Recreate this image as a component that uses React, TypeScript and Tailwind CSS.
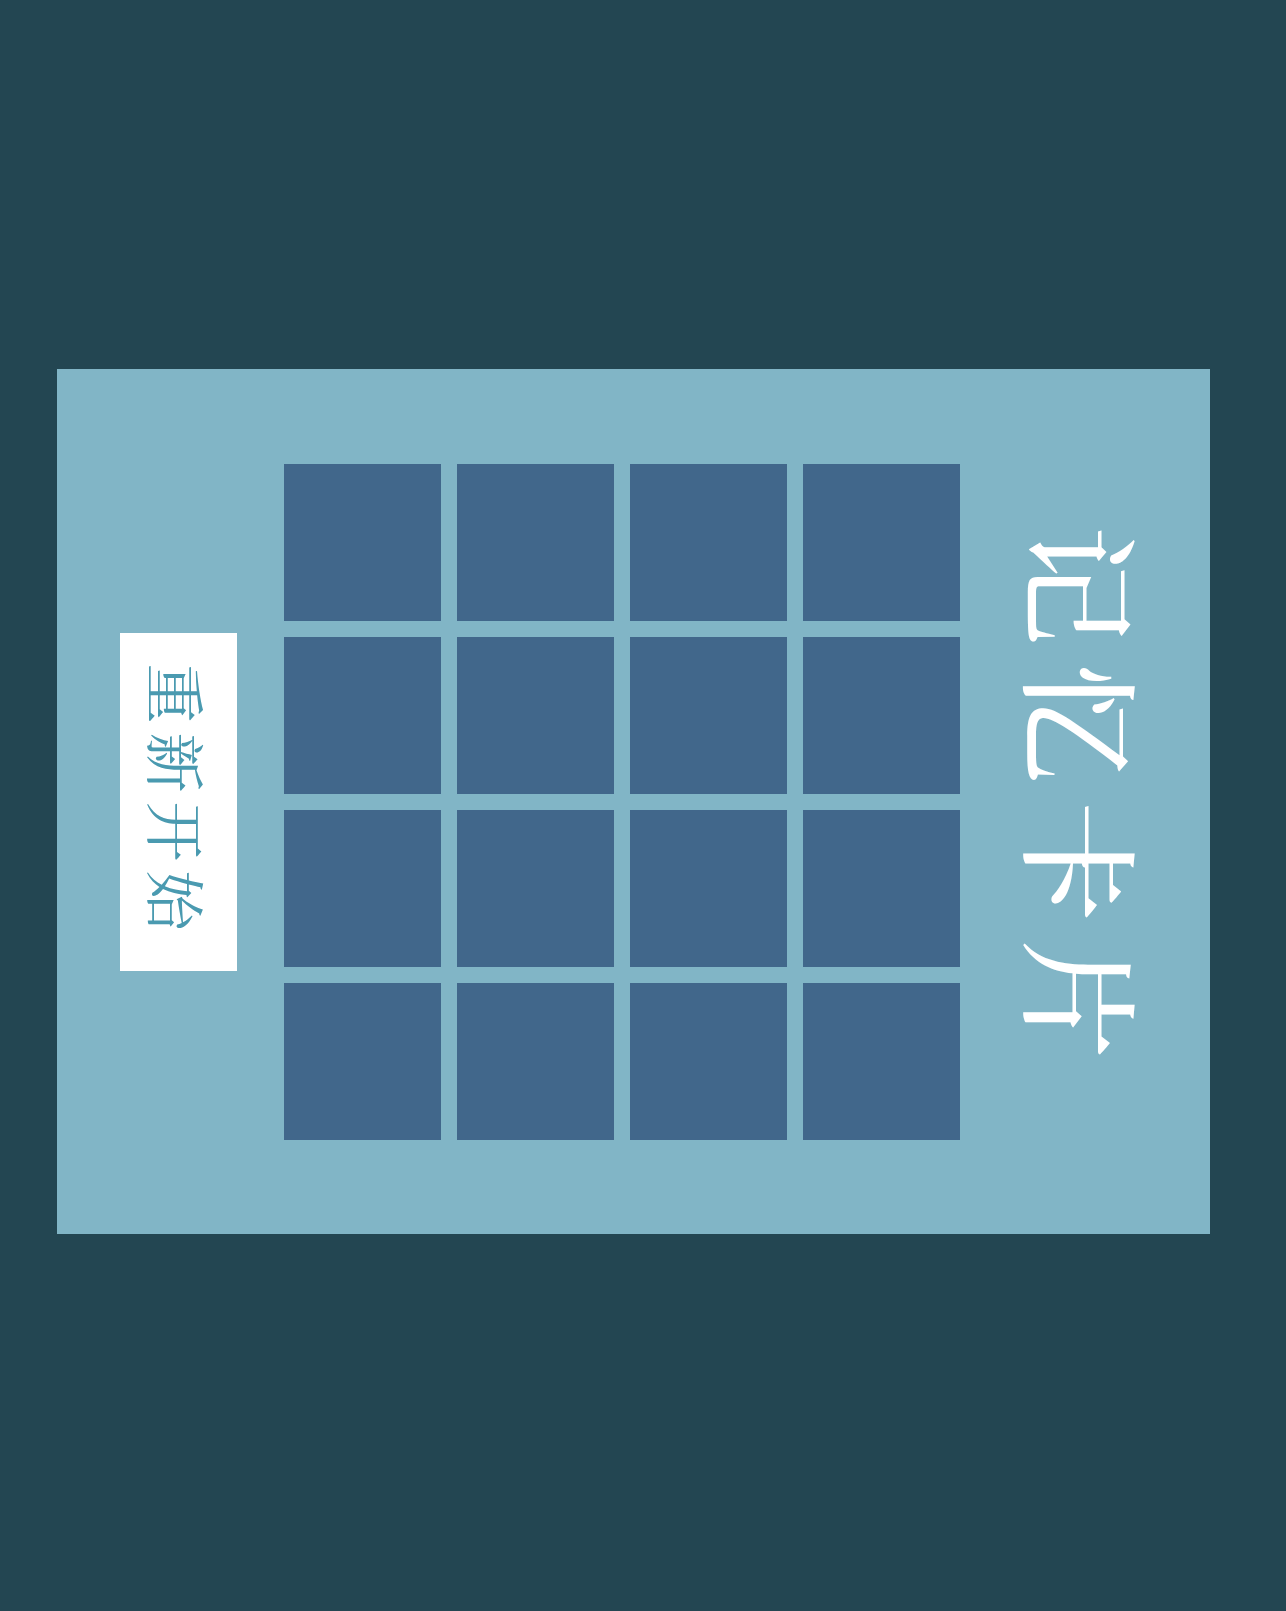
const tiles = Array.from({ length: 16 }, (_, i) => i);

export default function App() {
  return (
    <div className="min-h-[1611px] w-full bg-[#234652] pt-[225px] pl-[201px]">
      <div className="w-[865px] h-[1153px] bg-[#81b5c6] rotate-90 flex flex-col items-center [font-family:'Noto_Serif_CJK_SC',serif]">
        <div className="h-[250px] w-full flex items-center justify-center">
          <h1 className="text-[120px] leading-none font-medium text-white tracking-[0.15em]">记忆卡片</h1>
        </div>
        <div className="grid grid-cols-4 gap-4 w-[676px]">
          {tiles.map((t) => (
            <div key={t} className="size-[157px] bg-[#41678b]" />
          ))}
        </div>
        <button className="mt-[47px] w-[338px] h-[117px] bg-white text-[#4a9ab0] text-[60px] leading-none font-normal tracking-[0.15em]">
          重新开始
        </button>
      </div>
    </div>
  );
}
